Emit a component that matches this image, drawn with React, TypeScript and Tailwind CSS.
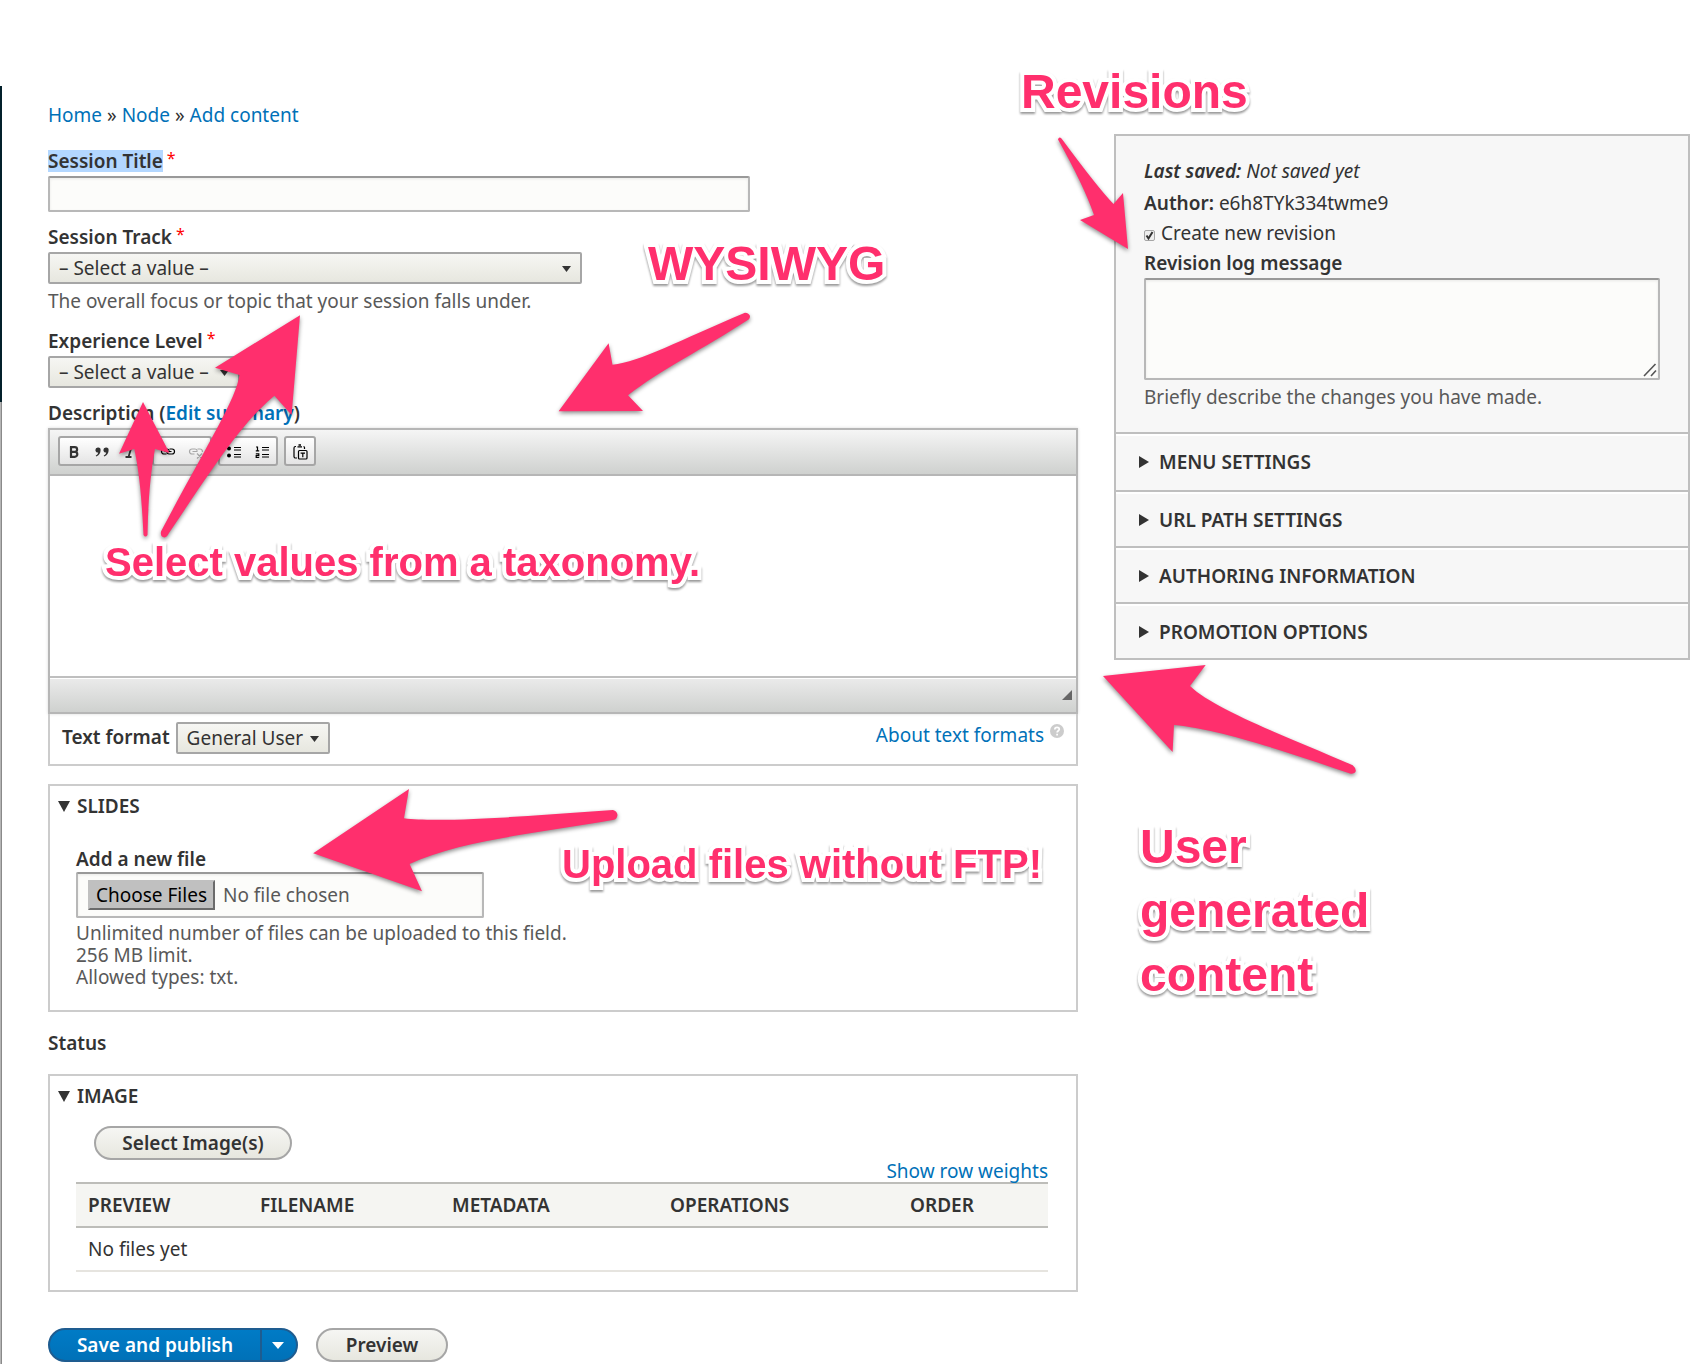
import type { ReactNode } from "react";

const FIELD =
  "border-2 border-[#b8b8b8] border-t-[#999999] rounded-xs bg-[#fcfcfa] text-[#595959] shadow-[inset_0_1px_3px_rgba(0,0,0,0.08)]";
const LINK = "text-[#0071b8] hover:underline";

function Required() {
  return (
    <span className="ml-1 align-[4px] text-base leading-none font-normal text-[#ff0000]" aria-hidden="true">
      *
    </span>
  );
}

function Label({ htmlFor, children }: { htmlFor: string; children: ReactNode }) {
  return (
    <label htmlFor={htmlFor} className="block h-[22px] font-semibold whitespace-nowrap">
      {children}
    </label>
  );
}

function Select({ id, value, className }: { id: string; value: string; className: string }) {
  return (
    <div className={className}>
      <select
        id={id}
        defaultValue={value}
        className="col-start-1 row-start-1 h-8 w-full appearance-none rounded-xs border-2 border-[#a6a6a6] bg-linear-to-b from-[#f6f6f3] to-[#e7e7df] pr-6 pl-[9px] text-[#333333]"
      >
        <option>{value}</option>
      </select>
      <svg
        viewBox="0 0 9 6"
        className="pointer-events-none col-start-1 row-start-1 mt-0.5 mr-[11px] h-1.5 w-[9px] self-center justify-self-end fill-[#333333]"
      >
        <path d="M0 0h9L4.500 6z" />
      </svg>
    </div>
  );
}

function ToolGroup({ children }: { children: ReactNode }) {
  return (
    <div className="flex h-[30px] rounded-[3px] border-2 border-[#a6a6a6] bg-linear-to-b from-white to-[#e4e4e4]">
      {children}
    </div>
  );
}

function ToolButton({ label, faded, children }: { label: string; faded?: boolean; children: ReactNode }) {
  return (
    <button
      type="button"
      aria-label={label}
      className={
        faded
          ? "flex w-7 items-center justify-center pt-0.5 opacity-30"
          : "flex w-7 items-center justify-center pt-0.5"
      }
    >
      <svg viewBox="0 0 16 16" className="size-4 text-black" fill="none" stroke="currentColor" strokeWidth="1.200">
        {children}
      </svg>
    </button>
  );
}

function EditorToolbar() {
  return (
    <div className="flex h-[46px] gap-1.5 border-b-2 border-[#b6b6b6] bg-linear-to-b from-[#f5f5f5] to-[#cfd1cf] pt-1.5 pl-2">
      <ToolGroup>
        <ToolButton label="Bold">
          <path d="M5 2.500v11M4 3.200h4.800a2.200 2.200 0 0 1 0 4.600H5M8.800 7.800a2.500 2.500 0 0 1 0 5H4" strokeWidth="2.200" stroke="#333" />
        </ToolButton>
        <ToolButton label="Block quote">
          <g fill="#333" stroke="none">
            <path d="M4 3.500a2.500 2.500 0 0 1 2.600 2.700c0 3-1.500 5.100-4.400 6.300l-.5-1c1.500-.8 2.300-1.700 2.500-3A2.400 2.400 0 0 1 1.400 6 2.500 2.500 0 0 1 4 3.500z" />
            <path d="M12 3.500a2.500 2.500 0 0 1 2.600 2.700c0 3-1.500 5.100-4.400 6.300l-.5-1c1.500-.8 2.300-1.700 2.500-3A2.400 2.400 0 0 1 9.400 6 2.500 2.500 0 0 1 12 3.500z" />
          </g>
        </ToolButton>
        <ToolButton label="Italic">
          <path d="M6 3h6M3.500 13h6M9.500 3l-3 10" strokeWidth="1.800" stroke="#333" />
        </ToolButton>
      </ToolGroup>
      <ToolGroup>
        <ToolButton label="Link">
          <path d="M6.500 10H4a2.500 2.500 0 0 1 0-5h3a2.500 2.500 0 0 1 2.300 1.700M9.500 5H12a2.500 2.500 0 0 1 0 5H9a2.500 2.500 0 0 1-2.300-1.700M4.500 7.500h7" />
        </ToolButton>
        <ToolButton label="Unlink" faded>
          <path d="M6.500 10H4a2.500 2.500 0 0 1 0-5h3a2.500 2.500 0 0 1 2.300 1.700M9.500 5H12a2.500 2.500 0 0 1 2.400 3M4.500 7.500h5M9 9.500l5 5M14 9.500l-5 5" />
        </ToolButton>
      </ToolGroup>
      <ToolGroup>
        <ToolButton label="Bulleted list">
          <circle cx="3" cy="4.500" r="2" fill="currentColor" stroke="none" />
          <circle cx="3" cy="11.500" r="2" fill="currentColor" stroke="none" />
          <path d="M8 3.500h7M8 6h7M8 10.500h7M8 13h7" />
        </ToolButton>
        <ToolButton label="Numbered list">
          <path d="M2 3h1.500v4M1.800 6.900h3.400M1.800 9.800h3v1.900h-2.600v1.800h3" />
          <path d="M8 3.500h7M8 6h7M8 10.500h7M8 13h7" />
        </ToolButton>
      </ToolGroup>
      <ToolGroup>
        <ToolButton label="Paste as plain text">
          <path d="M4 2.500h-.5A1.500 1.500 0 0 0 2 4v8.500A1.500 1.500 0 0 0 3.500 14H5M11.500 2.500a1 1 0 0 1 1 1V5M5.500 2.800h4.500" />
          <path d="M6.500 1h2.500" strokeWidth="1.500" />
          <rect x="6.500" y="6.500" width="8.500" height="8.500" rx="1" />
          <path d="M8.600 9.200h4.400M10.800 9v4.200" />
        </ToolButton>
      </ToolGroup>
    </div>
  );
}

function DescriptionEditor() {
  return (
    <section>
      <h4 className="mt-3.5 mb-1 h-[22px] font-semibold whitespace-nowrap" id="description-label">
        Description (
        <button type="button" className={LINK}>
          Edit summary
        </button>
        )
      </h4>
      <div className="border-2 border-[#b6b6b6] shadow-[0_0_3px_rgba(0,0,0,0.15)]">
        <EditorToolbar />
        <textarea aria-labelledby="description-label" className="block h-[200px] w-full resize-none outline-none" />
        <div className="flex h-9 items-center justify-end border-t-2 border-[#bfbfbf] bg-linear-to-b from-[#ebebeb] to-[#cfd1cf] pr-1 shadow-[inset_0_1px_0_white]">
          <svg viewBox="0 0 10 10" className="size-2.5 fill-[#666666]">
            <path d="M10 0v10H0z" />
          </svg>
        </div>
      </div>
      <div className="flex justify-between border-2 border-t-0 border-[#cccccc] pt-2 pr-3 pb-2.5 pl-3">
        <div className="flex gap-1.5">
          <label htmlFor="format" className="pt-1 font-semibold">
            Text format
          </label>
          <Select id="format" value="General User" className="grid w-[154px]" />
        </div>
        <a href="#formats" className="flex gap-1.5 pt-0.5 text-[#0071b8]">
          About text formats
          <svg viewBox="0 0 14 14" className="size-3.5">
            <circle cx="7" cy="7" r="7" fill="#cccccc" />
            <path d="M4.800 5.500C4.800 2.500 9.300 2.700 9.300 5.200 9.300 6.700 7.100 6.800 7.100 8.600M7.100 9.800v1.700" fill="none" stroke="#fff" strokeWidth="1.700" />
          </svg>
        </a>
      </div>
    </section>
  );
}

function Fieldset({ title, className, children }: { title: string; className: string; children: ReactNode }) {
  return (
    <details open className={className}>
      <summary className="flex cursor-pointer list-none items-center gap-[7px] pl-2 font-semibold uppercase">
        <svg viewBox="0 0 12 11" className="h-[11px] w-3 fill-[#333333]">
          <path d="M0 0h12L6 11z" />
        </svg>
        {title}
      </summary>
      {children}
    </details>
  );
}

function SlidesSection() {
  return (
    <Fieldset title="Slides" className="mt-[18px] border-2 border-[#cccccc] pt-[9px] pb-[22px]">
      <div className="mt-[31px] px-[26px]">
        <Label htmlFor="slides">Add a new file</Label>
        <input
          id="slides"
          type="file"
          multiple
          className={`${FIELD} mt-0.5 block h-[46px] w-full max-w-[408px] px-2.5 pt-1.5 file:mr-2 file:h-[30px] file:border-2 file:border-[#c0c0c0] file:border-r-[#6b6b6b] file:border-b-[#6b6b6b] file:bg-[#c0c0c0] file:px-1.5 file:text-black`}
        />
        <p className="mt-1 text-[#595959]">
          Unlimited number of files can be uploaded to this field.
          <br />
          256 MB limit.
          <br />
          Allowed types: txt.
        </p>
      </div>
    </Fieldset>
  );
}

function ImageSection() {
  return (
    <Fieldset title="Image" className="border-2 border-[#cccccc] pt-[9px] pb-[18px]">
      <div className="px-[26px] pt-[19px] pr-7">
        <PillButton className="ml-[18px] w-[198px]">Select Image(s)</PillButton>
        <div className="flex h-[22px] justify-end">
          <button type="button" className={LINK}>
            Show row weights
          </button>
        </div>
        <table className="w-full table-fixed text-left">
          <thead>
            <tr className="h-11 border-y-2 border-[#bdbdb9] bg-[#f5f5f2] uppercase">
              <th className="w-[172px] pl-3 font-semibold">Preview</th>
              <th className="w-[192px] pl-3 font-semibold">Filename</th>
              <th className="w-[218px] pl-3 font-semibold">Metadata</th>
              <th className="w-[240px] pl-3 font-semibold">Operations</th>
              <th className="pl-3 font-semibold">Order</th>
            </tr>
          </thead>
          <tbody>
            <tr className="h-11 border-b-2 border-[#e6e4df]">
              <td colSpan={5} className="pl-3">
                No files yet
              </td>
            </tr>
          </tbody>
        </table>
      </div>
    </Fieldset>
  );
}

function PillButton({ className, children }: { className: string; children: ReactNode }) {
  return (
    <div className={className}>
      <button
        type="button"
        className="block h-[34px] w-full rounded-full border-2 border-[#a6a6a6] bg-linear-to-b from-[#f6f6f3] to-[#e7e7df] font-semibold text-[#333333]"
      >
        {children}
      </button>
    </div>
  );
}

function Actions() {
  return (
    <div className="mt-9 flex gap-[18px]">
      <div className="flex h-[34px] w-[250px] rounded-full border-2 border-[#1e5c90] bg-linear-to-b from-[#007bc6] to-[#0071b8] text-white">
        <button type="submit" className="flex-1 font-semibold">
          Save and publish
        </button>
        <button
          type="button"
          aria-label="More save options"
          className="flex w-9 items-center border-l-2 border-[#1e5c90] pl-2.5"
        >
          <svg viewBox="0 0 12 7" className="h-[7px] w-3 fill-white">
            <path d="M0 0h12L6 7z" />
          </svg>
        </button>
      </div>
      <PillButton className="w-[132px]">Preview</PillButton>
    </div>
  );
}

const PANELS = ["Menu settings", "URL path settings", "Authoring information", "Promotion options"];

function Sidebar() {
  return (
    <aside className="mt-[134px] border-2 border-[#bfbfbf] bg-[#f7f7f7]">
      <div className="px-7 pt-6 pb-6">
        <p className="italic">
          <strong className="font-semibold">Last saved:</strong> Not saved yet
        </p>
        <p className="mt-2.5">
          <strong className="font-semibold">Author:</strong> e6h8TYk334twme9
        </p>
        <label className="mt-2 flex items-center gap-1.5">
          <span className="grid">
            <input
              type="checkbox"
              defaultChecked
              className="peer col-start-1 row-start-1 mt-1 size-[11px] appearance-none rounded-xs border border-[#a6a6a6] bg-[#eeeeee]"
            />
            <svg
              viewBox="0 0 11 11"
              className="pointer-events-none invisible col-start-1 row-start-1 mt-1 size-[11px] peer-checked:visible"
            >
              <path d="M2.500 5.500l2 3 4-6.500" fill="none" stroke="#333" strokeWidth="2" />
            </svg>
          </span>
          Create new revision
        </label>
        <div className="mt-2">
          <Label htmlFor="log">Revision log message</Label>
        </div>
        <div className="mt-1 grid">
          <textarea id="log" className={`${FIELD} col-start-1 row-start-1 block h-[102px] w-full resize-none`} />
          <svg
            viewBox="0 0 14 14"
            className="pointer-events-none col-start-1 row-start-1 mr-[3px] mb-[3px] size-3.5 self-end justify-self-end"
            fill="none"
            stroke="#555"
            strokeWidth="1.600"
          >
            <path d="M1 13L12.500 1M8 13l5-5.500" />
          </svg>
        </div>
        <p className="mt-1.5 text-[#595959]">Briefly describe the changes you have made.</p>
      </div>
      {PANELS.map((title) => (
        <details key={title} className="border-t-2 border-[#bfbfbf] first-of-type:pb-0.5">
          <summary className="flex h-[54px] cursor-pointer list-none items-center gap-2.5 border-t-2 border-white pl-[23px] font-semibold uppercase">
            <svg viewBox="0 0 10 12" className="h-3 w-2.5 fill-[#333333]">
              <path d="M0 0l10 6-10 6z" />
            </svg>
            {title}
          </summary>
        </details>
      ))}
    </aside>
  );
}

const ARROWS = [
  "M1128 249 L1123 193 L1113.500 204 Q1098 188 1061.500 138.500 Q1059 136 1058 139.500 Q1084 186 1094 215 L1080 220 Z",
  "M558.600 411.300 L608.600 343.300 L612.500 364.700 C640 362 680 340 745 312.700 Q749 313 750 316 Q750 319 747 320.500 C705 348 660 370 628 395.300 L643 411 Z",
  "M300 315.300 L215 367.700 L239.500 375 C236 400 205 448 161 531.500 Q160 537 164.500 537.500 Q167 537 169 533 C209 474 240 424 274.400 395.700 L291.600 415 Z",
  "M143 402 L119 453.700 L134.300 449 C140 475 142 505 143.500 535 Q145.500 538 147.500 535 C148 505 150 475 155 449 L169.500 453 Z",
  "M313.200 853.300 L409 789 L404 818.300 C440 823 530 816 613 810 Q617 811 617.500 815 Q617 819 614 819.700 C540 833 460 840 409.600 864 L422 891.300 Z",
  "M1103 676 L1205.700 665 L1190 686 C1215 710 1290 738 1352.700 765.200 Q1356 768 1355.800 771 Q1355 774 1350 773.600 C1290 753 1220 729 1174 725 L1172.600 752 Z",
];

const NOTES = [
  { text: "Revisions", className: "absolute top-[64px] left-[1021px] text-5xl leading-[56px]" },
  { text: "WYSIWYG", className: "absolute top-[236px] left-[648px] text-5xl leading-[56px]" },
  { text: "Select values from a taxonomy.", className: "absolute top-[537px] left-[105px] text-[40px] leading-[50px]" },
  { text: "Upload files without FTP!", className: "absolute top-[839px] left-[562px] text-[40px] leading-[50px]" },
  { text: "User generated content", className: "absolute top-[815px] left-[1140px] w-[240px] text-5xl leading-[64px]" },
];

function Annotations() {
  return (
    <div className="pointer-events-none absolute inset-0 overflow-hidden">
      <svg className="absolute top-0 left-0 h-[1364px] w-[1706px] fill-[#ff2f6d] drop-shadow-[0_2px_2px_rgba(0,0,0,0.45)]">
        {ARROWS.map((d) => (
          <path key={d} d={d} />
        ))}
      </svg>
      <div className="font-['Liberation_Sans',Arial,sans-serif] font-bold text-[#ff2f6d] drop-shadow-[0_2px_1px_rgba(0,0,0,0.4)] [paint-order:stroke_fill] [-webkit-text-stroke:8px_white] [stroke-linejoin:round]">
        {NOTES.map((note) => (
          <p key={note.text} className={note.className}>
            {note.text}
          </p>
        ))}
      </div>
    </div>
  );
}

export default function App() {
  return (
    <div className="relative flex min-h-screen bg-white font-['Noto_Sans','Open_Sans',sans-serif] text-[19px] leading-[22px] text-[#333333]">
      <div className="flex w-0.5 flex-col pt-[86px]">
        <div className="h-[316px] bg-[#03202b]" />
        <div className="flex-1 border-r border-[#8a8a8a] bg-[#b5b5b5]" />
      </div>
      <div className="grid flex-1 grid-cols-[minmax(0,1030fr)_minmax(0,576fr)] items-start gap-9 pr-4 pb-0.5 pl-[46px]">
        <main className="pt-[104px]">
          <nav aria-label="Breadcrumb">
            <a href="#home" className={LINK}>
              Home
            </a>{" "}
            »{" "}
            <a href="#node" className={LINK}>
              Node
            </a>{" "}
            »{" "}
            <a href="#add" className={LINK}>
              Add content
            </a>
          </nav>
          <form onSubmit={(event) => event.preventDefault()} className="mt-6">
            <Label htmlFor="title">
              <span className="inline-block bg-[#b3d7ff]">Session Title</span>
              <Required />
            </Label>
            <input id="title" type="text" className={`${FIELD} mt-1 block h-9 w-full max-w-[702px] px-2`} />
            <div className="mt-3.5">
              <Label htmlFor="track">
                Session Track
                <Required />
              </Label>
              <Select id="track" value="– Select a value –" className="mt-1 grid w-full max-w-[534px]" />
              <p className="mt-1.5 text-[#595959]">The overall focus or topic that your session falls under.</p>
            </div>
            <div className="mt-[18px]">
              <Label htmlFor="level">
                Experience Level
                <Required />
              </Label>
              <Select id="level" value="– Select a value –" className="mt-1 grid w-[192px]" />
            </div>
            <DescriptionEditor />
            <SlidesSection />
            <h4 className="mt-5 mb-5 font-semibold">Status</h4>
            <ImageSection />
            <Actions />
          </form>
        </main>
        <Sidebar />
      </div>
      <Annotations />
    </div>
  );
}
